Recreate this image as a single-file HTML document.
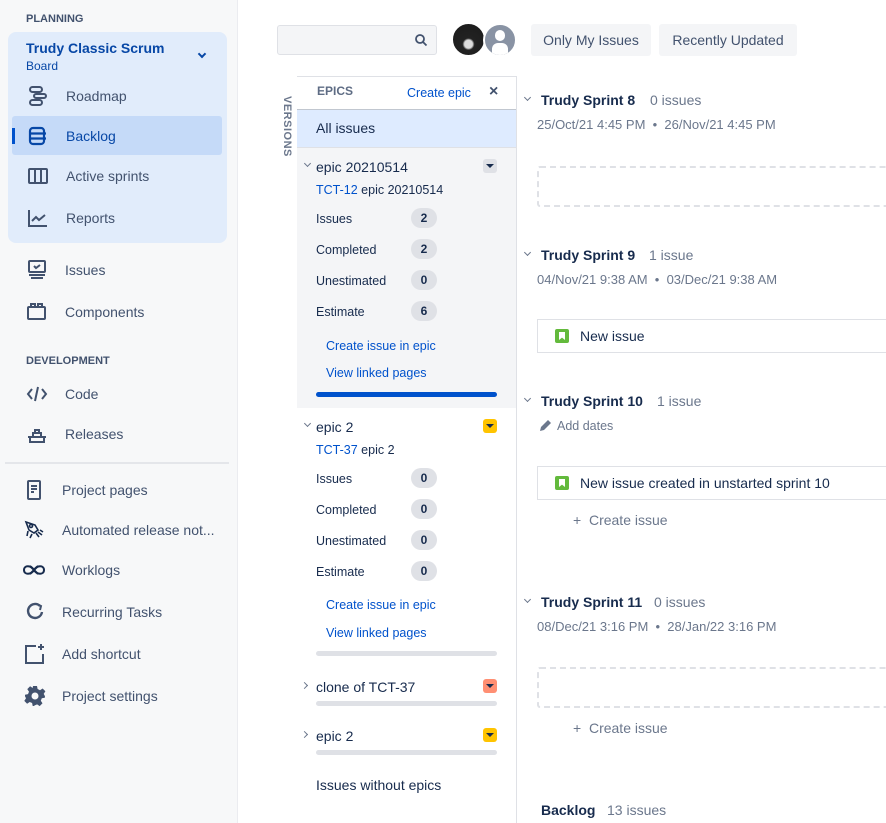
<!DOCTYPE html>
<html><head><meta charset="utf-8"><style>
*{margin:0;padding:0;box-sizing:border-box}
html,body{width:886px;height:823px;overflow:hidden}
body{background:#fff;font-family:"Liberation Sans",sans-serif;color:#172b4d;position:relative;font-size:14px}
.a{position:absolute;white-space:nowrap;line-height:16px}
.nav{color:#42526e;font-size:14px}
.ic{position:absolute}
.lbl{font-size:12.5px;color:#172b4d}
.bd{position:absolute;width:26px;height:20px;border-radius:10px;background:#dfe1e6;font-size:12px;font-weight:bold;text-align:center;line-height:20px;color:#172b4d}
.lnk{color:#0052cc;font-size:12.5px}
.hd{font-weight:bold;color:#172b4d;font-size:14px}
.gr{color:#6b778c}
.dt{color:#6b778c;font-size:13px}
.dash{position:absolute;left:537px;width:360px;height:41px;border:2px dashed #dfe1e6;border-radius:3px}
.card{position:absolute;left:537px;width:360px;height:34px;border:1px solid #dfe1e6;background:#fff}
.story{position:absolute;left:17px;top:9px;width:14px;height:14px;background:#63ba3c;border-radius:2px}
.story:after{content:"";position:absolute;left:4px;top:3px;width:6px;height:8px;background:#fff;clip-path:polygon(0 0,100% 0,100% 100%,50% 70%,0 100%)}
.chev{position:absolute;width:6px;height:6px;border-right:1.5px solid #6b778c;border-bottom:1.5px solid #6b778c;transform:rotate(45deg)}
.chr{position:absolute;width:6px;height:6px;border-right:1.5px solid #6b778c;border-bottom:1.5px solid #6b778c;transform:rotate(-45deg)}
.bar{position:absolute;left:316px;width:181px;height:5px;border-radius:3px;background:#dfe1e6}
.col{position:absolute;left:483px;width:14px;height:14px;border-radius:3px}
.col:after{content:"";position:absolute;left:3px;top:5px;border-left:4px solid transparent;border-right:4px solid transparent;border-top:4px solid #172b4d}
</style></head><body>
<div class="a" style="left:0;top:0;width:238px;height:823px;background:#f7f8f9;border-right:1px solid #ebecf0"></div>
<div class="a" style="left:26px;top:11px;font-size:11px;font-weight:bold;color:#42526e">PLANNING</div>
<div class="a" style="left:8px;top:32px;width:219px;height:211px;background:#e1ecfb;border-radius:8px"></div>
<div class="a" style="left:26px;top:40px;font-size:14px;font-weight:bold;color:#0747a6">Trudy Classic Scrum</div>
<div class="a" style="left:26px;top:58px;font-size:12px;color:#0747a6">Board</div>
<div class="chev" style="left:199px;top:51px;border-color:#0747a6;border-width:2px"></div>
<div class="a" style="left:12px;top:116px;width:210px;height:39px;background:#c5daf8;border-radius:3px"></div>
<div class="a" style="left:12px;top:128px;width:3px;height:16px;background:#0052cc"></div>
<svg class="ic" style="left:27px;top:85px" width="22" height="22" viewBox="0 0 22 22" fill="none" stroke="#42526e" stroke-width="2"><rect x="3" y="2" width="12" height="5" rx="2.5"/><rect x="7" y="9" width="12" height="4" rx="2"/><rect x="3" y="15" width="12" height="5" rx="2.5"/></svg>
<div class="a nav" style="left:66px;top:88px">Roadmap</div>
<svg class="ic" style="left:27px;top:125px" width="22" height="22" viewBox="0 0 22 22" fill="none" stroke="#0747a6" stroke-width="2.2"><rect x="3" y="3" width="14" height="16" rx="3"/><path d="M3 8.5h16M3 13.5h16"/></svg>
<div class="a" style="left:66px;top:128px;color:#0747a6">Backlog</div>
<svg class="ic" style="left:27px;top:165px" width="22" height="22" viewBox="0 0 22 22" fill="none" stroke="#42526e" stroke-width="2"><rect x="2" y="4" width="18" height="14" rx="1"/><path d="M8 4v14M14 4v14"/></svg>
<div class="a nav" style="left:66px;top:168px">Active sprints</div>
<svg class="ic" style="left:27px;top:207px" width="22" height="22" viewBox="0 0 22 22" fill="none" stroke="#42526e" stroke-width="2"><path d="M2 3v16h18"/><path d="M5 14l4-4 3 3 6-5"/></svg>
<div class="a nav" style="left:66px;top:210px">Reports</div>
<svg class="ic" style="left:26px;top:259px" width="22" height="22" viewBox="0 0 22 22" fill="none" stroke="#42526e" stroke-width="2"><rect x="3" y="2" width="16" height="11" rx="1"/><path d="M8 7l2 2 4-3M3 16h16M5 19h12"/></svg>
<div class="a nav" style="left:65px;top:262px">Issues</div>
<svg class="ic" style="left:26px;top:301px" width="22" height="22" viewBox="0 0 22 22" fill="none" stroke="#42526e" stroke-width="2"><rect x="2" y="6" width="17" height="12" rx="1"/><path d="M5 6V3h4v3M12 6V3h4v3"/></svg>
<div class="a nav" style="left:65px;top:304px">Components</div>
<div class="a" style="left:26px;top:353px;font-size:11px;font-weight:bold;color:#42526e">DEVELOPMENT</div>
<svg class="ic" style="left:26px;top:383px" width="22" height="22" viewBox="0 0 22 22" fill="none" stroke="#42526e" stroke-width="2"><path d="M6 6l-4 5 4 5M16 6l4 5-4 5M12 4l-3 14"/></svg>
<div class="a nav" style="left:65px;top:386px">Code</div>
<svg class="ic" style="left:26px;top:423px" width="22" height="22" viewBox="0 0 22 22" fill="none" stroke="#42526e" stroke-width="2"><path d="M2 14h18M4 14v5h14v-5M7 14v-4h8v4M9 10V7h4v3"/></svg>
<div class="a nav" style="left:65px;top:426px">Releases</div>
<div class="a" style="left:5px;top:462px;width:224px;height:2px;background:#e4e6ea"></div>
<svg class="ic" style="left:24px;top:479px" width="22" height="22" viewBox="0 0 22 22" fill="none" stroke="#42526e" stroke-width="2"><rect x="4" y="2" width="12" height="18" rx="1"/><path d="M7 7h6M7 10h6M7 13h3"/></svg>
<div class="a nav" style="left:62px;top:482px">Project pages</div>
<svg class="ic" style="left:24px;top:519px" width="22" height="22" viewBox="0 0 22 22" fill="none" stroke="#172b4d" stroke-width="1.6"><path d="M2 3l9 3 3 5-4 3-5-3z"/><circle cx="7" cy="7" r="1.5"/><path d="M12 14l3 4M14 13l4 3M16 11l3 2M4 12l-1 5M8 15l-2 4"/></svg>
<div class="a nav" style="left:62px;top:522px">Automated release not...</div>
<svg class="ic" style="left:22px;top:560px" width="24" height="20" viewBox="0 0 24 20" fill="none" stroke="#172b4d" stroke-width="2"><path d="M12 10c-3-5-10-5-10 0s7 5 10 0 10-5 10 0-7 5-10 0z"/><path d="M8 6l8 8M16 6l-8 8"/></svg>
<div class="a nav" style="left:62px;top:562px">Worklogs</div>
<svg class="ic" style="left:24px;top:601px" width="22" height="22" viewBox="0 0 22 22" fill="none" stroke="#42526e" stroke-width="2.4"><path d="M16 5A7 7 0 1 0 18 11"/><path d="M13 3l4 2-1 4" stroke-width="2"/></svg>
<div class="a nav" style="left:62px;top:604px">Recurring Tasks</div>
<svg class="ic" style="left:24px;top:643px" width="22" height="22" viewBox="0 0 22 22" fill="none" stroke="#42526e" stroke-width="2"><path d="M12 3H2v17h17v-9"/><path d="M17 1v6M14 4h6"/></svg>
<div class="a nav" style="left:62px;top:646px">Add shortcut</div>
<svg class="ic" style="left:24px;top:685px" width="22" height="22" viewBox="0 0 22 22"><path fill="#42526e" d="M9 1h4l.6 3 2.4 1.2 2.6-1.7 2.8 2.8-1.7 2.6L21 11.3v-.3 0l-.2 1.7-3 .6-1 2.4 1.7 2.6-2.8 2.8-2.6-1.7-2.4 1L10 21H8.7l-.6-3-2.4-1-2.6 1.7-2.8-2.8 1.7-2.6L1 11.3V9.7l3-.6 1-2.4-1.7-2.6 2.8-2.8L8.7 3z"/><circle cx="11" cy="11" r="3.5" fill="#f7f8f9"/></svg>
<div class="a nav" style="left:62px;top:688px">Project settings</div>

<div class="a" style="left:277px;top:25px;width:160px;height:30px;background:#f4f5f7;border:1px solid #dfe1e6;border-radius:3px"></div>
<svg class="ic" style="left:414px;top:33px" width="14" height="14" viewBox="0 0 14 14" fill="none" stroke="#42526e" stroke-width="1.8"><circle cx="6" cy="6" r="4"/><path d="M9 9l3.5 3.5"/></svg>
<div class="a" style="left:452px;top:23px;width:33px;height:33px;border-radius:50%;background:radial-gradient(circle at 50% 65%,#ddd 0 4px,#222 6px,#1a1a1a 100%);border:1.5px solid #fff"></div>
<div class="a" style="left:483px;top:23px;width:34px;height:34px;border-radius:50%;background:#8993a4;border:2px solid #fff;overflow:hidden">
 <div style="position:absolute;left:10px;top:5px;width:10px;height:11px;border-radius:5px;background:#fff"></div>
 <div style="position:absolute;left:7px;top:18px;width:16px;height:12px;border-radius:6px 6px 2px 2px;background:#fff"></div></div>
<div class="a" style="left:531px;top:24px;width:120px;height:32px;background:#f4f5f7;border-radius:3px;color:#42526e;line-height:32px;text-align:center">Only My Issues</div>
<div class="a" style="left:659px;top:24px;width:138px;height:32px;background:#f4f5f7;border-radius:3px;color:#42526e;line-height:32px;text-align:center">Recently Updated</div>

<div class="a" style="top:118px;transform:rotate(90deg);font-size:11px;font-weight:bold;color:#6b778c;letter-spacing:.5px;transform-origin:center;width:60px;text-align:center;left:257px">VERSIONS</div>

<div class="a" style="left:297px;top:76px;width:220px;height:760px;border-top:1px solid #dfe1e6;border-right:1px solid #dfe1e6"></div>
<div class="a" style="left:317px;top:83px;font-size:12px;font-weight:bold;color:#5e6c84">EPICS</div>
<div class="a lnk" style="left:407px;top:85px">Create epic</div>
<div class="a" style="left:489px;top:84px;font-size:16px;color:#42526e;font-weight:bold">×</div>
<div class="a" style="left:297px;top:109px;width:219px;height:39px;background:#deebff;border-top:1px solid #c1c7d0;border-bottom:1px solid #dfe1e6"></div>
<div class="a" style="left:316px;top:120px">All issues</div>
<div class="a" style="left:297px;top:148px;width:219px;height:260px;background:#f4f5f7"></div>
<div class="chev" style="left:305px;top:161px;width:5px;height:5px;border-width:1px"></div>
<div class="a" style="left:316px;top:159px">epic 20210514</div>
<div class="col" style="background:#dfe1e6;top:159px"></div>
<div class="a" style="left:316px;top:182px;font-size:12.5px"><span style="color:#0052cc">TCT-12</span> epic 20210514</div>
<div class="a lbl" style="left:316px;top:211px">Issues</div><div class="bd" style="left:411px;top:208px">2</div>
<div class="a lbl" style="left:316px;top:242px">Completed</div><div class="bd" style="left:411px;top:239px">2</div>
<div class="a lbl" style="left:316px;top:273px">Unestimated</div><div class="bd" style="left:411px;top:270px">0</div>
<div class="a lbl" style="left:316px;top:304px">Estimate</div><div class="bd" style="left:411px;top:301px">6</div>
<div class="a lnk" style="left:326px;top:338px">Create issue in epic</div>
<div class="a lnk" style="left:326px;top:365px">View linked pages</div>
<div class="bar" style="top:392px;background:#0052cc"></div>

<div class="chev" style="left:305px;top:421px;width:5px;height:5px;border-width:1px"></div>
<div class="a" style="left:316px;top:419px">epic 2</div>
<div class="col" style="background:#ffc400;top:419px"></div>
<div class="a" style="left:316px;top:442px;font-size:12.5px"><span style="color:#0052cc">TCT-37</span> epic 2</div>
<div class="a lbl" style="left:316px;top:471px">Issues</div><div class="bd" style="left:411px;top:468px">0</div>
<div class="a lbl" style="left:316px;top:502px">Completed</div><div class="bd" style="left:411px;top:499px">0</div>
<div class="a lbl" style="left:316px;top:533px">Unestimated</div><div class="bd" style="left:411px;top:530px">0</div>
<div class="a lbl" style="left:316px;top:564px">Estimate</div><div class="bd" style="left:411px;top:561px">0</div>
<div class="a lnk" style="left:326px;top:597px">Create issue in epic</div>
<div class="a lnk" style="left:326px;top:625px">View linked pages</div>
<div class="bar" style="top:651px"></div>

<div class="chr" style="left:302px;top:683px;width:5px;height:5px;border-width:1px"></div>
<div class="a" style="left:316px;top:679px">clone of TCT-37</div>
<div class="col" style="background:#ff8f73;top:679px"></div>
<div class="bar" style="top:701px"></div>
<div class="chr" style="left:302px;top:732px;width:5px;height:5px;border-width:1px"></div>
<div class="a" style="left:316px;top:728px">epic 2</div>
<div class="col" style="background:#ffc400;top:728px"></div>
<div class="bar" style="top:750px"></div>
<div class="a" style="left:316px;top:777px">Issues without epics</div>

<div class="chev" style="left:525px;top:95px;width:5px;height:5px;border-width:1px"></div>
<div class="a hd" style="left:541px;top:92px">Trudy Sprint 8</div><div class="a gr" style="left:650px;top:92px">0 issues</div>
<div class="a dt" style="left:537px;top:117px">25/Oct/21 4:45 PM &nbsp;•&nbsp; 26/Nov/21 4:45 PM</div>
<div class="dash" style="top:166px"></div>

<div class="chev" style="left:525px;top:250px;width:5px;height:5px;border-width:1px"></div>
<div class="a hd" style="left:541px;top:247px">Trudy Sprint 9</div><div class="a gr" style="left:649px;top:247px">1 issue</div>
<div class="a dt" style="left:537px;top:272px">04/Nov/21 9:38 AM &nbsp;•&nbsp; 03/Dec/21 9:38 AM</div>
<div class="card" style="top:319px"><div class="story"></div><div class="a" style="left:42px;top:8px">New issue</div></div>

<div class="chev" style="left:525px;top:396px;width:5px;height:5px;border-width:1px"></div>
<div class="a hd" style="left:541px;top:393px">Trudy Sprint 10</div><div class="a gr" style="left:657px;top:393px">1 issue</div>
<svg class="ic" style="left:539px;top:419px" width="13" height="13" viewBox="0 0 13 13"><path d="M1 12l1-4 7-7 3 3-7 7z" fill="#6b778c"/></svg>
<div class="a dt" style="left:557px;top:418px;font-size:12.5px">Add dates</div>
<div class="card" style="top:466px"><div class="story"></div><div class="a" style="left:42px;top:8px">New issue created in unstarted sprint 10</div></div>
<div class="a gr" style="left:573px;top:512px">+ &nbsp;Create issue</div>

<div class="chev" style="left:525px;top:597px;width:5px;height:5px;border-width:1px"></div>
<div class="a hd" style="left:541px;top:594px">Trudy Sprint 11</div><div class="a gr" style="left:654px;top:594px">0 issues</div>
<div class="a dt" style="left:537px;top:619px">08/Dec/21 3:16 PM &nbsp;•&nbsp; 28/Jan/22 3:16 PM</div>
<div class="dash" style="top:667px"></div>
<div class="a gr" style="left:573px;top:720px">+ &nbsp;Create issue</div>

<div class="a hd" style="left:541px;top:802px">Backlog</div><div class="a gr" style="left:607px;top:802px">13 issues</div>
</body></html>
